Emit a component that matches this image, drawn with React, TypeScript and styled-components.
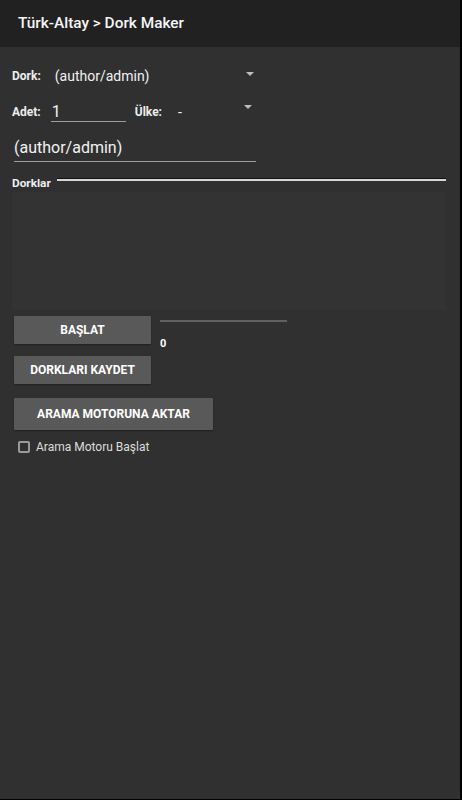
import React from "react";
import styled, { createGlobalStyle } from "styled-components";

const GlobalStyle = createGlobalStyle`
  html, body {
    margin: 0;
    padding: 0;
    background: #000000;
  }
  * {
    box-sizing: border-box;
  }
`;

const App: React.FC = () => {
  return (
    <>
      <GlobalStyle />
      <Screen>
        <Toolbar>Türk-Altay &gt; Dork Maker</Toolbar>
        <Content>
          <Row height={36}>
            <Label>Dork:</Label>
            <Select width={200} offset={14}>
              <span>(author/admin)</span>
              <Arrow top={14} />
            </Select>
          </Row>
          <Row height={36}>
            <Label>Adet:</Label>
            <NumberField>1</NumberField>
            <Label style={{ marginLeft: 9 }}>Ülke:</Label>
            <Select width={75} offset={16}>
              <span>-</span>
              <Arrow top={11} />
            </Select>
          </Row>
          <TextField>(author/admin)</TextField>
          <Section>
            <SectionLabel>Dorklar</SectionLabel>
            <SectionLine />
          </Section>
          <ResultArea />
          <ButtonRow>
            <Button width={137}>BAŞLAT</Button>
            <Progress>
              <ProgressTrack />
              <Count>0</Count>
            </Progress>
          </ButtonRow>
          <Button width={137}>DORKLARI KAYDET</Button>
          <Button width={199} tall>
            ARAMA MOTORUNA AKTAR
          </Button>
          <CheckRow>
            <Box />
            <span>Arama Motoru Başlat</span>
          </CheckRow>
        </Content>
      </Screen>
    </>
  );
};

export default App;

const Screen = styled("div")`
  width: 460px;
  height: 799px;
  background-color: #303030;
  font-family: Roboto, "Noto Sans", sans-serif;
  color: #ffffff;
  display: flex;
  flex-direction: column;
`;

const Toolbar = styled("div")`
  height: 47px;
  flex-shrink: 0;
  background-color: #212121;
  display: flex;
  align-items: center;
  padding: 0 0 1px 18px;
  font-size: 15.4px;
  font-weight: 500;
  color: #f5f5f5;
`;

const Content = styled("div")`
  display: flex;
  flex-direction: column;
  padding: 11px 12px 0 12px;
`;

const Row = styled("div")<{ height: number }>`
  display: flex;
  align-items: center;
  height: ${(p) => p.height}px;
`;

const Label = styled("span")`
  font-size: 12px;
  font-weight: 700;
  color: #eeeeee;
`;

const Select = styled("div")<{ width: number; offset: number }>`
  position: relative;
  display: flex;
  align-items: center;
  width: ${(p) => p.width}px;
  margin-left: ${(p) => p.offset}px;
  font-size: 14px;
  color: #f0f0f0;
  align-self: stretch;
`;

const Arrow = styled("i")<{ top: number }>`
  position: absolute;
  right: 1px;
  top: ${(p) => p.top}px;
  width: 0;
  height: 0;
  border-left: 4px solid transparent;
  border-right: 4px solid transparent;
  border-top: 4px solid #bdbdbd;
`;

const NumberField = styled("div")`
  width: 75px;
  margin: -2px 0 0 10px;
  padding: 1px 0 0 1px;
  font-size: 16px;
  color: #f0f0f0;
  border-bottom: 1px solid #9e9e9e;
`;

const TextField = styled("div")`
  margin: 8px 0 0 2px;
  width: 242px;
  padding-bottom: 4px;
  font-size: 16px;
  color: #f2f2f2;
  border-bottom: 1px solid #9e9e9e;
`;

const Section = styled("div")`
  display: flex;
  align-items: flex-start;
  margin-top: 16px;
  height: 14px;
`;

const SectionLabel = styled("span")`
  font-size: 11.8px;
  font-weight: 700;
  color: #eeeeee;
  line-height: 15px;
  margin-top: -2px;
`;

const SectionLine = styled("div")`
  flex: 1;
  margin: 0 2px 0 6px;
  height: 3px;
  border-top: 1px solid #111111;
  background-color: #d6d6d6;
`;

const ResultArea = styled("div")`
  height: 118px;
  margin-right: 2px;
  background-color: #333333;
`;

const ButtonRow = styled("div")`
  display: flex;
  align-items: flex-start;
  height: 28px;
  margin-top: 6px;
`;

const Button = styled("div")<{ width: number; tall?: boolean }>`
  flex-shrink: 0;
  width: ${(p) => p.width}px;
  height: ${(p) => (p.tall ? 32 : 28)}px;
  margin: ${(p) => (p.tall ? "14px" : "12px")} 0 0 2px;
  background-color: #595959;
  color: #ffffff;
  font-size: 12px;
  font-weight: 700;
  display: flex;
  align-items: center;
  justify-content: center;
  border-radius: 1px;
  box-shadow: 0 1px 2px rgba(0, 0, 0, 0.35);

  ${ButtonRow} > & {
    margin-top: 0;
  }
`;

const Progress = styled("div")`
  display: flex;
  flex-direction: column;
  margin-left: 9px;
`;

const ProgressTrack = styled("div")`
  width: 127px;
  height: 2px;
  margin-top: 4px;
  background-color: #616161;
`;

const Count = styled("span")`
  margin-top: 15px;
  font-size: 11px;
  font-weight: 700;
`;

const CheckRow = styled("div")`
  display: flex;
  align-items: center;
  gap: 6px;
  margin: 10px 0 0 6px;
  font-size: 12px;
  color: #dddddd;
`;

const Box = styled("span")`
  width: 12px;
  height: 12px;
  border: 2px solid #9a9a9a;
  border-radius: 2px;
`;
